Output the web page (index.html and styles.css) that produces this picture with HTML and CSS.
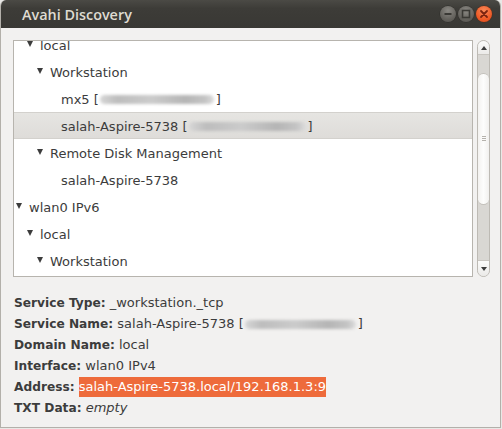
FILE: index.html
```html
<!DOCTYPE html>
<html>
<head>
<meta charset="utf-8">
<link rel="stylesheet" href="styles.css">
</head>
<body>
<div class="window">
  <div class="titlebar">
    <span class="title">Avahi Discovery</span>
    <div class="controls">
      <span class="btn gray"><svg width="16" height="16" viewBox="0 0 16 16"><rect x="4.5" y="7" width="7" height="2" fill="#3a3935"/></svg></span>
      <span class="btn gray"><svg width="16" height="16" viewBox="0 0 16 16"><rect x="4.5" y="4.5" width="7" height="7" fill="none" stroke="#3a3935" stroke-width="1.6"/></svg></span>
      <span class="btn close"><svg width="16" height="16" viewBox="0 0 16 16"><path d="M5 5 L11 11 M11 5 L5 11" stroke="#7a2410" stroke-width="1.8" stroke-linecap="round"/></svg></span>
    </div>
  </div>
  <div class="content">
    <div class="treearea">
      <div class="tree">
        <div class="rows">
          <div class="row l1"><span class="exp"></span><span>local</span></div>
          <div class="row l2"><span class="exp"></span><span>Workstation</span></div>
          <div class="row l3"><span>mx5 [</span><span class="smudge s1"></span><span>]</span></div>
          <div class="row l3 selected"><span>salah-Aspire-5738 [</span><span class="smudge s2"></span><span>]</span></div>
          <div class="row l2"><span class="exp"></span><span>Remote Disk Management</span></div>
          <div class="row l3"><span>salah-Aspire-5738</span></div>
          <div class="row l0"><span class="exp"></span><span>wlan0 IPv6</span></div>
          <div class="row l1"><span class="exp"></span><span>local</span></div>
          <div class="row l2"><span class="exp"></span><span>Workstation</span></div>
        </div>
      </div>
      <div class="scrollbar">
        <div class="stepper up"><span class="arrow-up"></span></div>
        <div class="track-top"></div>
        <div class="thumb"><span class="grip"></span></div>
        <div class="track-bottom"></div>
        <div class="stepper down"><span class="arrow-down"></span></div>
      </div>
    </div>
    <div class="info">
      <div class="line"><b>Service Type:</b> _workstation._tcp</div>
      <div class="line"><b>Service Name:</b> salah-Aspire-5738 [<span class="smudge s3"></span>]</div>
      <div class="line"><b>Domain Name:</b> local</div>
      <div class="line"><b>Interface:</b> wlan0 IPv4</div>
      <div class="line"><b>Address:</b> <span class="hl">salah-Aspire-5738.local/192.168.1.3:9</span></div>
      <div class="line"><b>TXT Data:</b> <i>empty</i></div>
    </div>
  </div>
</div>
</body>
</html>
```
FILE: styles.css
```css
html, body {
  margin: 0;
  padding: 0;
}
body {
  width: 502px;
  height: 429px;
  background: #e9e8e6;
  font-family: "DejaVu Sans", "Open Sans", sans-serif;
  font-size: 13px;
  color: #3c3c3c;
  overflow: hidden;
}
.window {
  width: 499px;
  height: 427px;
  background: #f2f1f0;
  border: 1px solid #b3b0aa;
  border-top: none;
  border-radius: 6px 6px 0 0;
  overflow: hidden;
}
.titlebar {
  height: 28px;
  display: flex;
  align-items: center;
  padding-left: 21px;
  background: linear-gradient(#4b4a45, #3d3c38 30%, #393834);
}
.title {
  font-family: "Open Sans", "DejaVu Sans", sans-serif;
  color: #dfdbd2;
  font-weight: 600;
  font-size: 14.4px;
}
.controls {
  margin-left: auto;
  display: flex;
  gap: 2px;
  padding-right: 8px;
}
.btn {
  width: 16px;
  height: 16px;
  border-radius: 50%;
  display: flex;
}
.btn.gray {
  background: radial-gradient(circle at 50% 30%, #8a8883, #5f5d58 70%, #54524d);
  box-shadow: 0 0 0 0.5px #2e2d2a;
}
.btn.close {
  background: radial-gradient(circle at 50% 30%, #f98a5a, #ef5b27 60%, #d9481a);
  box-shadow: 0 0 0 0.5px #5a2a16;
}
.content {
  padding: 12px 9px 0 12px;
}
.treearea {
  display: flex;
  gap: 4px;
  height: 237px;
}
.tree {
  width: 458px;
  border: 1px solid #b7b4ae;
  background: #ffffff;
  overflow: hidden;
}
.rows {
  margin-top: -10px;
}
.row {
  height: 27px;
  display: flex;
  align-items: center;
  white-space: nowrap;
  padding-top: 1px;
  box-sizing: border-box;
}
.row.l0 { padding-left: 1px; }
.row.l1 { padding-left: 12px; }
.row.l2 { padding-left: 22px; }
.row.l3 { padding-left: 47px; }
.row.selected {
  background: linear-gradient(#e6e5e2, #dedcd9);
  border-top: 1px solid #d3d1cd;
  border-bottom: 1px solid #d3d1cd;
}
.exp {
  width: 14px;
  height: 24px;
  flex: none;
  position: relative;
}
.exp::before {
  content: "";
  position: absolute;
  left: 1px;
  top: 8px;
  border-left: 3.5px solid transparent;
  border-right: 3.5px solid transparent;
  border-top: 6px solid #3c3c3c;
}
.smudge {
  display: inline-block;
  height: 9px;
  margin: 0 2px 0 1px;
  border-radius: 5px;
  background: linear-gradient(90deg, #d6d6d6, #bdbdbd 15%, #cbcbcb 45%, #b5b5b5 75%, #c4c4c4 92%, #dcdcdc);
  filter: blur(1.4px);
}
.s1 { width: 114px; }
.s2 { width: 117px; }
.s3 { width: 111px; vertical-align: middle; }
.scrollbar {
  width: 11px;
  border: 1px solid #bdbab4;
  border-radius: 7px;
  background: #d9d7d3;
  display: flex;
  flex-direction: column;
  overflow: hidden;
}
.stepper {
  height: 13px;
  flex: none;
  background: linear-gradient(#fbfbfa, #ebeae8);
  display: flex;
  justify-content: center;
  align-items: center;
}
.stepper.up { border-bottom: 1px solid #c9c6c1; }
.stepper.down { border-top: 1px solid #c9c6c1; height: 15px; }
.arrow-up {
  border-left: 3.5px solid transparent;
  border-right: 3.5px solid transparent;
  border-bottom: 4px solid #3c3c3c;
}
.arrow-down {
  border-left: 3.5px solid transparent;
  border-right: 3.5px solid transparent;
  border-top: 4px solid #3c3c3c;
}
.track-top { height: 18px; flex: none; }
.thumb {
  height: 130px;
  flex: none;
  background: linear-gradient(90deg, #f3f2f0, #fdfdfc 50%, #f1f0ee);
  border: 1px solid #c4c1bc;
  border-left: none;
  border-right: none;
  border-radius: 6px;
  display: flex;
  justify-content: center;
  align-items: center;
}
.grip {
  width: 4px;
  height: 6px;
  background: repeating-linear-gradient(#b5b2ac 0 1px, transparent 1px 2px);
}
.track-bottom { flex: 1; }
.info {
  padding-top: 15px;
  padding-left: 1px;
}
.line {
  height: 21px;
  line-height: 21px;
  white-space: nowrap;
}
.line b {
  font-weight: 700;
  font-size: 12.2px;
}
.hl {
  display: inline-block;
  height: 20px;
  line-height: 20px;
  background: #ee6b3b;
  color: #ffffff;
}
```
